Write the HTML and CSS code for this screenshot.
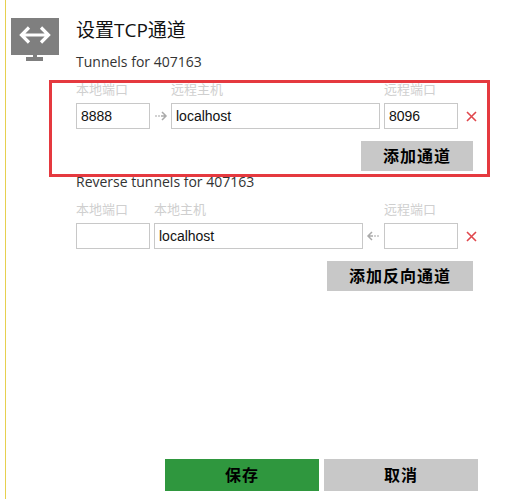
FILE: index.html
```html
<!DOCTYPE html>
<html lang="zh-CN">

<head>
    <meta charset="UTF-8">
    <meta name="viewport" content="width=device-width, initial-scale=1.0">
    <title>设置TCP通道</title>
    <link rel="stylesheet" href="styles.css">
</head>

<body>
    <div class="dialog">
        <div class="dialog-icon">
            <svg width="48" height="43" viewBox="0 0 48 43">
                <rect x="0" y="0" width="48" height="37" fill="#7f7f7f"/>
                <rect x="22" y="37" width="4" height="3" fill="#7f7f7f"/>
                <rect x="15" y="39" width="17" height="4" fill="#7f7f7f"/>
                <path d="M11 17H37M18 9.5L10.5 17L18 24.5M30 9.5L37.5 17L30 24.5" fill="none" stroke="#fff" stroke-width="3.2"/>
            </svg>
        </div>

        <div class="dialog-body">
            <h2>设置TCP通道</h2>

            <!-- Tunnels -->
            <div class="section-title">Tunnels for 407163</div>
            <div class="tunnel-row forward labels">
                <span>本地端口</span>
                <span></span>
                <span>远程主机</span>
                <span></span>
                <span>远程端口</span>
            </div>
            <div class="tunnel-row forward">
                <input type="text" value="8888">
                <svg class="arrow" width="21" height="12" viewBox="0 0 21 12">
                    <path d="M5 6H11" stroke="#c4c4c4" stroke-width="1.5" stroke-dasharray="2 1"/>
                    <path d="M11 6H16M12 2L16 6L12 10" fill="none" stroke="#aaa" stroke-width="1.5"/>
                </svg>
                <input type="text" value="localhost">
                <span></span>
                <input type="text" value="8096">
                <svg class="remove" width="11" height="11" viewBox="0 0 11 11">
                    <path d="M1 1L10 10M10 1L1 10" stroke="#e0474c" stroke-width="1.6"/>
                </svg>
            </div>
            <div class="add-row">
                <button type="button" class="add-btn">添加通道</button>
            </div>

            <!-- Reverse tunnels -->
            <div class="section-title reverse-title">Reverse tunnels for 407163</div>
            <div class="tunnel-row reverse labels">
                <span>本地端口</span>
                <span></span>
                <span>本地主机</span>
                <span></span>
                <span>远程端口</span>
            </div>
            <div class="tunnel-row reverse">
                <input type="text">
                <span></span>
                <input type="text" value="localhost">
                <svg class="arrow" width="21" height="12" viewBox="0 0 21 12">
                    <path d="M16 6H10" stroke="#c4c4c4" stroke-width="1.5" stroke-dasharray="2 1"/>
                    <path d="M10 6H5M9 2L5 6L9 10" fill="none" stroke="#aaa" stroke-width="1.5"/>
                </svg>
                <input type="text">
                <svg class="remove" width="11" height="11" viewBox="0 0 11 11">
                    <path d="M1 1L10 10M10 1L1 10" stroke="#e0474c" stroke-width="1.6"/>
                </svg>
            </div>
            <div class="add-row">
                <button type="button" class="add-btn">添加反向通道</button>
            </div>
        </div>

        <div class="dialog-footer">
            <button type="button" class="footer-btn save-btn">保存</button>
            <button type="button" class="footer-btn">取消</button>
        </div>
    </div>

    <!-- annotation drawn over the screenshot -->
    <div class="highlight"></div>
</body>

</html>
```

FILE: styles.css
```css
* {
  box-sizing: border-box;
}
body {
  font-family: "Open Sans", "Noto Sans CJK SC", sans-serif;
  margin: 0;
  height: 499px;
  background-color: #ffffff;
  color: #1a1a1a;
  overflow: hidden;
}
.dialog {
  position: relative;
  height: 499px;
  margin-left: 5px;
  border-left: 1px solid #e6d04f;
  display: flex;
  flex-direction: column;
}
.dialog-icon {
  position: absolute;
  left: 5px;
  top: 18px;
  line-height: 0;
}
.dialog-body {
  flex: 1;
  padding: 17px 0 0 70px;
}
h2 {
  margin: 0;
  font-size: 19px;
  font-weight: normal;
  line-height: 26px;
  color: #111;
}
.section-title {
  margin-top: 9px;
  font-size: 14px;
  line-height: 20px;
  color: #333;
}
.reverse-title {
  margin-top: 1px;
}
.tunnel-row {
  display: grid;
  align-items: center;
  height: 26px;
}
.tunnel-row.forward {
  grid-template-columns: 74px 21px 209px 4px 74px 25px;
}
.tunnel-row.reverse {
  grid-template-columns: 74px 4px 209px 21px 74px 25px;
}
.tunnel-row.labels {
  height: 20px;
  margin-top: 6px;
  margin-bottom: 5px;
  font-size: 13px;
  color: #cfcfcf;
}
.tunnel-row input {
  width: 100%;
  height: 26px;
  padding: 0 4px;
  border: 1px solid #c8c8c8;
  background-color: #fff;
  font-family: "Liberation Sans", sans-serif;
  font-size: 14px;
  color: #111;
}
.arrow {
  justify-self: center;
}
.remove {
  justify-self: end;
  margin-right: 6px;
}
.add-row {
  display: flex;
  justify-content: flex-end;
  width: 397px;
  margin-top: 12px;
}
.add-btn,
.footer-btn {
  border: none;
  background-color: #c8c8c8;
  font-family: inherit;
  font-weight: bold;
  font-size: 16px;
  letter-spacing: 1px;
  color: #000;
  padding: 0 0 2px;
}
.add-btn {
  height: 30px;
  padding: 0 22px 2px;
}
.dialog-footer {
  display: flex;
  gap: 5px;
  padding: 0 0 8px 159px;
}
.footer-btn {
  width: 154px;
  height: 32px;
}
.save-btn {
  background-color: #2f973e;
}
.highlight {
  position: absolute;
  left: 49px;
  top: 80px;
  width: 441px;
  height: 97px;
  border: 3px solid #e5393f;
}
```
